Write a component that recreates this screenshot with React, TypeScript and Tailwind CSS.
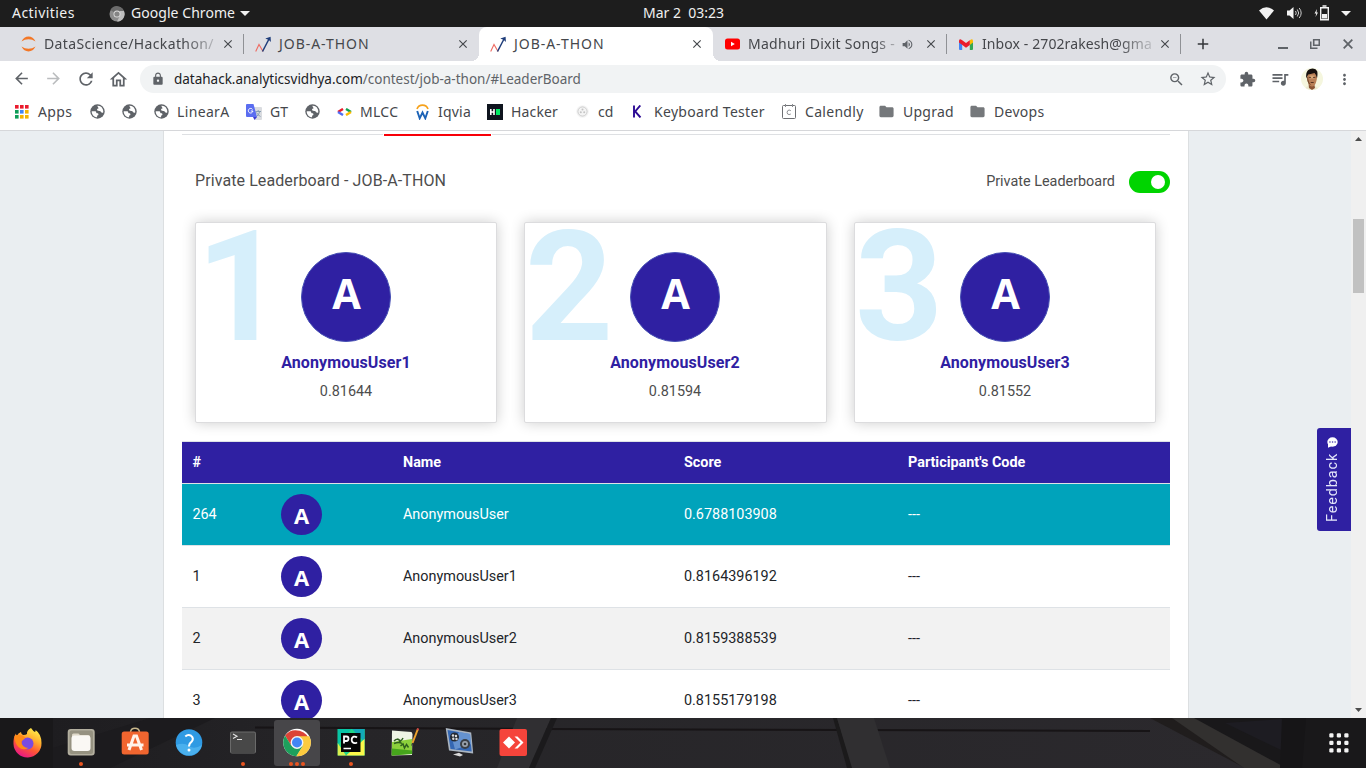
import type { ReactNode } from 'react';
import {
  MdArrowBack, MdArrowForward, MdRefresh, MdOutlineHome, MdLock, MdOutlineZoomOut, MdStarOutline,
  MdExtension, MdQueueMusic, MdMoreVert, MdFolder, MdClose, MdAdd, MdVolumeUp,
} from 'react-icons/md';

const Globe = () => (
  <svg width="15" height="15" viewBox="0 0 15 15" className="block">
    <circle cx="7.5" cy="7.5" r="7.2" fill="#5f6368" />
    <path d="M1.700 7.200h3.100c1 0 1.400.5 1.400 1.100 0 .7.4 1 1.100 1 .8 0 1.100.4 1.100 1.100 0 .8-.5 1-1.300 1.100v1.800C4 13 1.600 10.500 1.700 7.200z" fill="#fff" />
    <path d="M7.300 1.800c2.400-.2 4.200.9 5.100 2.600.8 1.300 1 2.600.8 4-.9.5-1.800.3-2.200-.5-.4-.8-.9-1-1.800-1-1.400 0-2.200-.3-2.200-1.300 0-.8.9-1 1.400-1.200.4-.3-.6-.9-1.100-2.600z" fill="#fff" />
  </svg>
);

const AppsGrid = () => (
  <svg width="14" height="14" viewBox="0 0 14 14" className="block">
    {['#ea1b2d', '#ea1b2d', '#ea1b2d', '#0f9d58', '#4285f4', '#f4b400', '#0f9d58', '#f4b400', '#f4b400'].map((c, i) => (
      <rect key={i} x={(i % 3) * 5} y={Math.floor(i / 3) * 5} width="3.600" height="3.600" fill={c} />
    ))}
  </svg>
);

const Translate = () => (
  <svg width="16" height="16" viewBox="0 0 16 16" className="block">
    <path d="M6 3h9q1 0 1 1v11q0 1-1 1H9z" fill="#dadce0" />
    <path d="M9.500 7.500h5.500M12.200 6v1.500M10.500 12.500q2.500-1.500 3.200-5M10.500 8.500q1 2.500 4 4" stroke="#7f98b0" strokeWidth=".9" fill="none" />
    <path d="M1 0h6.500L11 13H1q-1 0-1-1V1q0-1 1-1z" fill="#5a6df0" />
    <path d="M7 13h4l-2.500 3z" fill="#3a3ad0" />
    <path d="M6.500 5.400A2.300 2.300 0 1 0 6.900 7H4.800" stroke="#fff" strokeWidth="1" fill="none" />
  </svg>
);

const CodeArrows = () => (
  <svg width="15" height="8" viewBox="0 0 15 8" className="block">
    <path d="M6 .9L1 4" stroke="#ea1b2d" strokeWidth="2.300" />
    <path d="M1 4l5 3.100" stroke="#4f6df5" strokeWidth="2.300" />
    <path d="M9 .9L14 4" stroke="#12a150" strokeWidth="2.300" />
    <path d="M14 4L9 7.100" stroke="#fbbc05" strokeWidth="2.300" />
  </svg>
);

const Workera = () => (
  <svg width="13" height="16" viewBox="0 0 13 16" className="block">
    <path d="M1 5Q2.500 1.200 6.500 1.200T12 5" stroke="#f6a21c" strokeWidth="1.700" fill="none" />
    <path d="M1.200 7L3.700 14.300 6.500 8.500l2.800 5.800L11.800 7" stroke="#1c63b7" strokeWidth="1.900" fill="none" />
  </svg>
);

const HackerRank = () => (
  <svg width="16" height="16" viewBox="0 0 16 16" className="block">
    <rect width="16" height="16" fill="#0e141e" />
    <path d="M3.800 5v6M7 5v6M3.800 8H7" stroke="#fff" strokeWidth="1.600" />
    <rect x="9" y="5" width="4" height="6" fill="#00ea64" />
  </svg>
);

const FilmReel = () => (
  <svg width="13" height="13" viewBox="0 0 13 13" className="block">
    <circle cx="6.500" cy="6.500" r="6.300" fill="#f4f4f4" />
    <circle cx="6.500" cy="6.500" r="4.600" fill="none" stroke="#c4c4c4" strokeWidth=".8" />
    <circle cx="4.800" cy="7.300" r="1" fill="#c4c4c4" />
    <circle cx="8.200" cy="7.300" r="1" fill="#c4c4c4" />
    <circle cx="6.500" cy="4.500" r="1" fill="#c4c4c4" />
  </svg>
);

const LetterK = () => (
  <svg width="11" height="13" viewBox="0 0 11 13" className="block">
    <path d="M2 .5v12M8.300.500L3.200 6.500l5.300 6" stroke="#2c0a94" strokeWidth="1.900" fill="none" />
  </svg>
);

const CalendlyIcon = () => (
  <svg width="14" height="15" viewBox="0 0 14 15" className="block">
    <rect x=".5" y="1.500" width="13" height="13" rx="1" fill="none" stroke="#6d6f73" />
    <path d="M3.500 0v3M10.500 0v3" stroke="#8a8c90" />
    <path d="M8.800 6.700Q7 5.200 5.600 6.800q-1 1.600 0 3.200Q7 11.200 8.800 10" stroke="#8a8c90" fill="none" />
  </svg>
);

const Folder = () => <MdFolder className="-ml-[2px] size-[17px] text-[#75787b]" />;

const bookmarks: { w: string; icon: ReactNode; iw: string; text?: string; tr?: string }[] = [
  { w: 'w-[75px]', icon: <AppsGrid />, iw: 'w-[23px]', text: 'Apps', tr: 'tracking-[0.4px]' },
  { w: 'w-[32px]', icon: <Globe />, iw: 'w-[23px]' },
  { w: 'w-[32px]', icon: <Globe />, iw: 'w-[23px]' },
  { w: 'w-[92px]', icon: <Globe />, iw: 'w-[23px]', text: 'LinearA', tr: 'tracking-[0.35px]' },
  { w: 'w-[59px]', icon: <Translate />, iw: 'w-[24px]', text: 'GT' },
  { w: 'w-[32px]', icon: <Globe />, iw: 'w-[23px]' },
  { w: 'w-[79px]', icon: <CodeArrows />, iw: 'w-[23px]', text: 'MLCC', tr: 'tracking-[0.3px]' },
  { w: 'w-[71px]', icon: <Workera />, iw: 'w-[22px]', text: 'Iqvia', tr: 'tracking-[0.2px]' },
  { w: 'w-[89px]', icon: <HackerRank />, iw: 'w-[24px]', text: 'Hacker', tr: 'tracking-[0.15px]' },
  { w: 'w-[56px]', icon: <FilmReel />, iw: 'w-[22px]', text: 'cd' },
  { w: 'w-[150px]', icon: <LetterK />, iw: 'w-[22px]', text: 'Keyboard Tester', tr: 'tracking-[0.3px]' },
  { w: 'w-[98px]', icon: <CalendlyIcon />, iw: 'w-[23px]', text: 'Calendly', tr: 'tracking-[0.3px]' },
  { w: 'w-[91px]', icon: <Folder />, iw: 'w-[23px]', text: 'Upgrad', tr: 'tracking-[0.25px]' },
  { w: 'w-[91px]', icon: <Folder />, iw: 'w-[23px]', text: 'Devops', tr: 'tracking-[0.3px]' },
];

const Jupyter = () => (
  <svg width="15" height="16" viewBox="0 0 15 16" className="block">
    <path d="M.5 5.500Q3 .6 7.500.6t7 4.900Q11.500 3.300 7.500 3.300T.5 5.500zM.5 10.500q2.500 4.900 7 4.900t7-4.900q-3 2.200-7 2.200t-7-2.200z" fill="#f37726" />
  </svg>
);

const Spark = () => (
  <svg width="17" height="17" viewBox="0 0 17 17" className="block">
    <path d="M.7 15.500L4 8.500l4 7" stroke="#ee6b62" strokeWidth="1.100" fill="none" />
    <path d="M7.500 15.500L14 3" stroke="#1f3d7a" strokeWidth="1.500" fill="none" />
    <path d="M10.300 2.600L15.600.8l.3 5.200-2-2z" fill="#1f3d7a" />
  </svg>
);

const YouTube = () => (
  <svg width="15" height="12" viewBox="0 0 15 12" className="block">
    <rect y=".5" width="15" height="11" rx="2.500" fill="#f00" />
    <path d="M6 3.800v4.400L9.800 6z" fill="#fff" />
  </svg>
);

const Gmail = () => (
  <svg width="14" height="11" viewBox="0 0 14 11" className="block">
    <path d="M0 2v8q0 1 1 1h2.200V4z" fill="#4285f4" />
    <path d="M14 2v8q0 1-1 1h-2.200V4z" fill="#34a853" />
    <path d="M10.800 1.200Q14-1 14 2v1.500L10.800 6z" fill="#fbbc04" />
    <path d="M0 3.500V2Q0-1 3.200 1.200L7 4l3.800-2.800V6L7 8.800z" fill="#ea1c2c" />
  </svg>
);

const Close = () => <MdClose className="size-[14px] shrink-0 text-[#45484c]" />;

function TopBar() {
  return (
    <div className="flex h-[27px] items-center bg-[#1d1d1d] text-[14px] text-[#f0f0f0]">
      <span className="w-[109px] pb-[2px] pl-[12px] tracking-[0.45px]">Activities</span>
      <svg width="16" height="16" viewBox="0 0 16 16" className="block">
        <circle cx="8" cy="8" r="7.500" fill="#8c8c8c" />
        <path d="M8 8L1.400 4A7.500 7.500 0 0 1 15 5H8z" fill="#6b6b6b" />
        <path d="M15 5a7.500 7.500 0 0 1-7 10.500L11 9.500V5z" fill="#bdbdbd" />
        <circle cx="8" cy="8" r="3.500" fill="#ddd" />
        <circle cx="8" cy="8" r="2.600" fill="#848484" />
      </svg>
      <span className="ml-[6px] w-[109px] pb-[2px] tracking-[0.05px] whitespace-nowrap">Google Chrome</span>
      <svg width="10" height="5" viewBox="0 0 10 5"><path d="M0 0h10L5 5z" fill="#f0f0f0" /></svg>
      <span className="ml-[393px] pb-[2px] whitespace-pre">Mar 2  03:23</span>
      <div className="ml-auto flex items-center pr-[15px] pb-px">
        <svg width="15" height="13" viewBox="0 0 15 13"><path d="M0 3.500Q7.500-3 15 3.500L7.500 12.500z" fill="#f2f2f2" /></svg>
        <svg className="ml-[13px]" width="15" height="12" viewBox="0 0 15 12">
          <path d="M0 3.500h2.500L6.500 0v12l-4-3.500H0z" fill="#f2f2f2" />
          <path d="M8.500 4q1.500 2 0 4M10.300 2.500q2.800 3.500 0 7M12.200 1q4 5 0 10" stroke="#ccc" fill="none" />
        </svg>
        <svg className="ml-[12px]" width="16" height="16" viewBox="0 0 16 16">
          <path d="M3 4L.5 8.500h1.700L1.500 12 4 7.500H2.500z" fill="#f2f2f2" />
          <path d="M6.700 2.700h7.600v12H6.700zM8.500 1h4" stroke="#f2f2f2" strokeWidth="1.400" fill="none" />
          <path d="M8 9h5v4.500H8z" fill="#f2f2f2" />
        </svg>
        <svg className="ml-[11px]" width="10" height="5" viewBox="0 0 10 5"><path d="M0 0h10L5 5z" fill="#f2f2f2" /></svg>
      </div>
    </div>
  );
}

function Tab({ icon, iw, text, width, pl, line, sound, tw }: {
  icon: ReactNode; iw: string; text: string; width: string; pl: string; line?: boolean; sound?: boolean; tw: string;
}) {
  return (
    <div className={`flex h-[34px] items-center ${width} ${pl}`}>
      <div className={`shrink-0 ${iw}`}>{icon}</div>
      <span className={`shrink-0 pb-[2px] whitespace-nowrap ${tw}`}>{text}</span>
      <div className="ml-auto flex items-center gap-[8px]">
        {sound && <MdVolumeUp className="mr-[2px] size-[13px] text-[#5f6368]" />}
        <Close />
        <div className={`h-[20px] w-px ${line ? 'bg-[#8f9195]' : ''}`} />
      </div>
    </div>
  );
}

function TabStrip() {
  return (
    <div className="flex h-[34px] bg-[#dedfe4] text-[14px] text-[#45474b]">
      <Tab width="w-[244px]" pl="pl-[21px]" iw="w-[23px]" icon={<Jupyter />} text="DataScience/Hackathon/" tw="tracking-[0.37px] [mask-image:linear-gradient(to_right,black_82%,#0004)]" line />
      <Tab width="w-[235px]" pl="pl-[11px]" iw="w-[24px]" icon={<Spark />} text="JOB-A-THON" tw="tracking-[0.95px]" />
      <div className="relative w-[234px] rounded-t-[8px] bg-white">
        <Tab width="w-[234px]" pl="pl-[11px]" iw="w-[24px]" icon={<Spark />} text="JOB-A-THON" tw="tracking-[0.95px]" />
        <div className="absolute bottom-0 -left-[8px] size-[8px] bg-[radial-gradient(circle_at_0_0,transparent_8px,white_8px)]" />
        <div className="absolute -right-[8px] bottom-0 size-[8px] bg-[radial-gradient(circle_at_100%_0,transparent_8px,white_8px)]" />
      </div>
      <Tab width="w-[234px]" pl="pl-[12px]" iw="w-[23px]" icon={<YouTube />} text="Madhuri Dixit Songs -" tw="tracking-[0.27px] [mask-image:linear-gradient(to_right,black_86%,#0005)]" line sound />
      <Tab width="w-[234px]" pl="pl-[12px]" iw="w-[23px]" icon={<Gmail />} text="Inbox - 2702rakesh@gma" tw="tracking-[0.1px] [mask-image:linear-gradient(to_right,black_80%,#0003)]" line />
      <div className="flex flex-1 items-center">
        <MdAdd className="ml-[13px] size-[18px] text-[#333639]" />
        <svg className="ml-[66px]" width="10" height="10" viewBox="0 0 10 10"><path d="M0 9h10" stroke="#5f6368" strokeWidth="2" /></svg>
        <svg className="ml-[22px]" width="10" height="10" viewBox="0 0 10 10">
          <path d="M3.700.7h5.600v5.600H3.700zM.7 2.500v6.800h6.800" stroke="#5f6368" strokeWidth="1.600" fill="none" />
        </svg>
        <svg className="ml-[23px]" width="10" height="10" viewBox="0 0 10 10"><path d="M.7.7l8.600 8.600M9.300.7L.7 9.300" stroke="#5f6368" strokeWidth="1.800" /></svg>
      </div>
    </div>
  );
}

function Avatar() {
  return (
    <svg width="22" height="22" viewBox="0 0 22 22" className="block">
      <defs><clipPath id="face"><circle cx="11" cy="11" r="11" /></clipPath></defs>
      <g clipPath="url(#face)">
        <rect width="22" height="22" fill="#f5f6de" />
        <path d="M3.500 22q1-3.500 4-4.500h6q3 1 4 4.500z" fill="#ece9cf" />
        <path d="M7.500 15h5.500l1 5-3 2-3-2z" fill="#8a5434" />
        <path d="M6 7q0-3.500 5-3.500t5 4q.3 4-1 7-1.500 4-4 4t-4-4Q5.700 11 6 7z" fill="#b98057" />
        <path d="M7 9q.5 6 3.500 8.500-2.500-.5-3.700-3.500-.8-2.500-.5-5z" fill="#70452b" />
        <path d="M8.500 7.500h5v3h-5z" fill="#d7a878" />
        <path d="M5.300 10.500Q4.300 3 8.500 1.200q6-1.800 7.700 2 .7 3-.2 7Q15.300 6.500 13.500 5 9 6.300 7.200 6.500 6.200 8 5.300 10.500z" fill="#17110e" />
        <path d="M7.800 9.400h2.200M12 9.400h2.300M9.700 14.500h3" stroke="#3d2013" strokeWidth=".8" />
      </g>
    </svg>
  );
}

function Toolbar() {
  return (
    <div className="flex h-[36px] items-center bg-white text-[#5f6368]">
      <div className="flex w-[140px] gap-[13px] pl-[12px]">
        <MdArrowBack className="size-[19px]" />
        <MdArrowForward className="size-[19px] text-[#babcbe]" />
        <MdRefresh className="size-[20px]" />
        <MdOutlineHome className="-ml-px size-[21px]" />
      </div>
      <div className="flex h-[28px] w-[1086px] items-center rounded-full bg-[#f1f3f4] pl-[11px]">
        <MdLock className="size-[14px]" />
        <span className="ml-[9px] text-[13.5px] tracking-[-0.01px]"><span className="text-[#202124]">datahack.analyticsvidhya.com</span>/contest/job-a-thon/#LeaderBoard</span>
        <MdOutlineZoomOut className="ml-auto size-[17px]" />
        <MdStarOutline className="mr-[9px] ml-[14px] size-[18px]" />
      </div>
      <MdExtension className="ml-[13px] size-[17px]" />
      <MdQueueMusic className="ml-[14px] size-[20px]" />
      <div className="ml-[11px]"><Avatar /></div>
      <MdMoreVert className="ml-[13px] size-[17px]" />
    </div>
  );
}

function Bookmarks() {
  return (
    <div className="flex h-[34px] items-center border-b border-[#d6d7da] bg-white pb-[4px] pl-[15px] text-[14px] text-[#45474b]">
      {bookmarks.map((b, i) => (
        <div key={i} className={`flex shrink-0 items-center ${b.w}`}>
          <div className={`shrink-0 ${b.iw}`}>{b.icon}</div>
          {b.text && <span className={`whitespace-nowrap ${b.tr ?? ''}`}>{b.text}</span>}
        </div>
      ))}
    </div>
  );
}

const winners = [
  { rank: '1', name: 'AnonymousUser1', score: '0.81644', w: 'w-[302px]', pr: '' },
  { rank: '2', name: 'AnonymousUser2', score: '0.81594', w: 'w-[303px]', pr: 'pr-px' },
  { rank: '3', name: 'AnonymousUser3', score: '0.81552', w: 'w-[302px]', pr: '' },
];

const rows = [
  { n: '264', name: 'AnonymousUser', score: '0.6788103908', cls: 'bg-[#00a3bb] text-white' },
  { n: '1', name: 'AnonymousUser1', score: '0.8164396192', cls: 'bg-white text-[#222529]' },
  { n: '2', name: 'AnonymousUser2', score: '0.8159388539', cls: 'bg-[#f2f2f2] text-[#222529]' },
  { n: '3', name: 'AnonymousUser3', score: '0.8155179198', cls: 'bg-white text-[#222529]' },
];

const gridCols = 'grid grid-cols-[88.6px_122px_281px_224px_1fr] pl-[10.4px]';

function Page() {
  return (
    <div className="flex h-[587px] overflow-hidden bg-[#eaeef1] font-[Roboto,sans-serif]">
      <div className="ml-[163px] h-full w-[1026px] shrink-0 border-x border-[#dcdfe1] bg-white px-[18px]">
        <div className="mt-[3px] flex h-[2px] w-[988px] items-start gap-px">
          <div className="h-px w-[201px] bg-[#dee0e3]" />
          <div className="h-[2px] w-[107px] bg-[#f80008]" />
          <div className="h-px flex-1 bg-[#dee0e3]" />
        </div>
        <div className="mt-[34px] flex h-[24px] w-[988px] items-center pl-[13px] text-[#4d4d4d]">
          <span className="pb-[3px] text-[16px] tracking-[0.09px]">Private Leaderboard - JOB-A-THON</span>
          <span className="mr-[14px] ml-auto text-[14.4px]">Private Leaderboard</span>
          <div className="flex h-[22px] w-[41px] items-center justify-end rounded-full bg-[#00d400] pr-[5px]">
            <div className="size-[14px] rounded-full bg-white" />
          </div>
        </div>
        <div className="mt-[28px] flex gap-[27px] pl-[13px]">
          {winners.map((w) => (
            <div key={w.rank} className={`relative flex h-[201px] flex-col items-center rounded-[2px] border border-[#dcdcde] bg-white pt-[29px] shadow-[0_0_14px_rgba(0,0,0,0.2)] ${w.w} ${w.pr}`}>
              <span className="absolute top-[-12px] left-0 text-[154px] leading-[154px] font-bold text-[#d6effb]">{w.rank}</span>
              <div className="relative flex size-[90px] items-center justify-center rounded-full border border-[#4650b4] bg-[#2f20a2] pb-[7px] pl-px font-['Open_Sans',sans-serif] text-[41.500px] leading-none font-bold text-white">A</div>
              <span className="mt-[9px] text-[16px] leading-[24px] font-bold tracking-[0.12px] text-[#2f20a2]">{w.name}</span>
              <span className="mt-[6px] text-[14.400px] leading-[22px] text-[#4d4d4d]">{w.score}</span>
            </div>
          ))}
        </div>
        <div className="mt-[18px] w-[988px] border-t border-[#dee2e6] text-[14.400px]">
          <div className={`${gridCols} h-[42px] items-center border-b border-[#dee2e6] bg-[#2f20a2] font-bold text-white`}>
            <span>#</span><span /><span>Name</span><span>Score</span><span>Participant's Code</span>
          </div>
          {rows.map((r) => (
            <div key={r.n} className={`${gridCols} h-[62px] items-center border-b border-[#dee2e6] ${r.cls}`}>
              <span>{r.n}</span>
              <div className="flex size-[41px] items-center justify-center rounded-full bg-[#2f20a2] pt-px font-['Open_Sans',sans-serif] text-[22px] leading-none font-bold text-white">A</div>
              <span>{r.name}</span><span>{r.score}</span><span>---</span>
            </div>
          ))}
        </div>
      </div>
      <div className="flex flex-1 justify-end pt-[297px]">
        <div className="flex h-[103px] w-[34px] rotate-180 items-center justify-start rounded-r-[3px] bg-[#2f20a2] pt-[9px] pl-[3px] text-[14.400px] text-[#e4e6fa] [writing-mode:vertical-rl]">
          <span className="h-[68px] tracking-[0.9px] whitespace-nowrap">Feedback</span>
          <svg width="11" height="11" viewBox="0 0 11 11" className="mt-[6px] rotate-180">
            <ellipse cx="5.500" cy="5" rx="5.200" ry="4.700" fill="#fff" />
            <path d="M1 6.500v4.300L5 9z" fill="#fff" />
            <path d="M2.300 5h1.300M4.900 5h1.300M7.500 5h1.300" stroke="#5a50b8" strokeWidth="1.300" />
          </svg>
        </div>
      </div>
      <div className="flex w-[15px] shrink-0 flex-col items-center bg-[#f0f0f0]">
        <svg className="mt-[6px] shrink-0" width="7" height="4" viewBox="0 0 7 4"><path d="M0 4h7L3.500 0z" fill="#4c4c4c" /></svg>
        <div className="mt-[78px] h-[74px] w-[11px] shrink-0 bg-[#c1c1c1]" />
        <svg className="mt-auto mb-[6px] shrink-0" width="7" height="4" viewBox="0 0 7 4"><path d="M0 0h7L3.500 4z" fill="#4c4c4c" /></svg>
      </div>
    </div>
  );
}

const dockIcons: { key: string; dots: number; art: ReactNode }[] = [
  {
    key: 'firefox', dots: 0, art: (
      <>
        <defs>
          <linearGradient id="fx" x1=".8" y1="0" x2=".3" y2="1">
            <stop offset="0" stopColor="#fff44f" /><stop offset=".35" stopColor="#ffb02e" /><stop offset=".65" stopColor="#ff5634" /><stop offset="1" stopColor="#e8138b" />
          </linearGradient>
        </defs>
        <path d="M18 0q2 3 4 4 1-1 .5-2 6 4 6 13a14 14 0 0 1-28 1Q.200 9 3 5.500q0 2 1 2.500Q5 5 8 4q0 2 2 3 3 0 4-1-.500-3.500 4-6z" fill="url(#fx)" />
        <circle cx="14.500" cy="15.500" r="6" fill="#7a4be0" />
        <path d="M1.500 8Q7 5 12.500 9.500q-2 2.500-4.500 3.500 1 7 7.500 7-6 3-10-1T1.500 8z" fill="#ff8a16" />
      </>
    ),
  },
  {
    key: 'files', dots: 1, art: (
      <>
        <rect x=".7" y="1" width="27" height="26.500" rx="3" fill="#b3af9f" /><rect x="2.500" y="2.500" width="23.500" height="23.500" rx="2" fill="#969281" />
        <path d="M5 7q0-1.500 1.500-1.500h5L13 7h8.500Q23 7 23 8.500V19H5z" fill="#dfd9c9" />
        <rect x="4.500" y="7.500" width="19" height="15.500" rx="3" fill="#faf8f4" />
      </>
    ),
  },
  {
    key: 'software', dots: 0, art: (
      <>
        <path d="M9.500 4Q10 .3 14 .3T18.500 4" stroke="#c9b88c" strokeWidth="1.500" fill="none" />
        <rect x=".7" y="3.500" width="27" height="23" rx="2.500" fill="#f0652f" />
        <path d="M8 22L13 8h2.500l5 14M6 17h16.500" stroke="#fff3ea" strokeWidth="3" fill="none" />
      </>
    ),
  },
  {
    key: 'help', dots: 0, art: (
      <>
        <circle cx="14" cy="14.500" r="13.300" fill="#2f9ae3" />
        <path d="M1 17a13.300 13.300 0 0 0 26 0Q19 22 14 18T1 17z" fill="#4ab0ee" />
        <path d="M10.300 8.500Q13 6 16 7.700q3.200 2.500.8 5.800-2.800 2-2.800 5" stroke="#fff" strokeWidth="2" fill="none" />
        <circle cx="14" cy="22" r="1.500" fill="#fff" />
      </>
    ),
  },
  {
    key: 'terminal', dots: 1, art: (
      <>
        <rect x="1" y="3.500" width="26" height="22" rx="2" fill="#6a6a6a" /><rect x="2" y="4.500" width="24" height="20.500" rx="1" fill="#484848" />
        <path d="M4 6l4 2.200-4 2.200M8 11.500h5" stroke="#e5e5e5" strokeWidth="1.100" fill="none" />
      </>
    ),
  },
  {
    key: 'chrome', dots: 3, art: (
      <>
        <circle cx="14" cy="14.500" r="13.800" fill="#fff" />
        <path d="M14 14.500H26.600A13.800 13.800 0 0 0 2.050 7.600L8.300 18z" fill="#dc4437" />
        <path d="M2.050 7.600A13.800 13.800 0 0 0 13.500 28.300L20 17.800 14 14.500 8.500 18z" fill="#1da05c" />
        <path d="M14 8.200h12.300A13.800 13.800 0 0 1 13.300 28.300L20 17.500 14 14.500z" fill="#fdcb3e" />
        <circle cx="14" cy="14.500" r="6.400" fill="#f3f3f3" /><circle cx="14" cy="14.500" r="5" fill="#4285f4" />
      </>
    ),
  },
  {
    key: 'pycharm', dots: 1, art: (
      <>
        <path d="M.7 1h27v26.500H.7z" fill="#21d789" />
        <path d="M.7 1h14L.7 17z" fill="#08c4a5" /><path d="M15 1h12.500v13z" fill="#12a9b8" /><path d="M27.500 11v16.500H9z" fill="#fcf84a" /><path d="M.7 15L9 27.500H.7z" fill="#d9ee4e" />
        <rect x="4" y="5" width="19.500" height="19" fill="#060606" />
        <path d="M7 15.500V8.500h2.300q2.200.1 2.200 2.200T9.300 13H7M20 9.500q-1.500-1.300-3.300-.8-2.300.8-2 3.500.5 3.200 3.500 3 1-.1 1.800-.8" stroke="#fff" strokeWidth="1.800" fill="none" />
        <path d="M6.500 20.500H14" stroke="#fff" strokeWidth="1.500" />
      </>
    ),
  },
  {
    key: 'editor', dots: 0, art: (
      <>
        <path d="M1 2.500l19.500 1.500 1 2L21 27 .7 27.500z" fill="#eef3e4" /><path d="M1 14l20-3v14.500L.8 27.500z" fill="#8cd03c" /><path d="M.8 20.500l20.400 2v3.500L.7 27.500z" fill="#46a51c" />
        <path d="M3 13q3-3 5-1t4-2M6.500 11q3 1 2.500 3.500M3 15.500q5-2 8 0M9.500 18l2.500-2 1.500 4 2-3.500 2 3" stroke="#2e5f1d" strokeWidth="1.500" fill="none" />
        <path d="M26.700 1.500L21.500 15" stroke="#eda22c" strokeWidth="2" /><path d="M26.500 2L27.200.3" stroke="#d34b45" strokeWidth="2.200" /><path d="M21.500 15l-.8 2.500" stroke="#333" />
      </>
    ),
  },
  {
    key: 'media', dots: 0, art: (
      <>
        <path d="M.7 0l25.500 4.500 2 21L4 22.500z" fill="#aab4c0" /><path d="M2.500 2l22.500 4 1.700 17.500L5.500 21z" fill="#3467b3" /><path d="M14 4l11 2 1.500 10L10 21.500 8 14z" fill="#7aa5dc" opacity=".7" />
        <circle cx="9.500" cy="9" r="4.500" fill="#262b33" /><circle cx="8" cy="7.500" r="1.200" fill="#ddd" /><circle cx="11" cy="8" r="1.200" fill="#ddd" /><circle cx="8.300" cy="10.800" r="1.200" fill="#ddd" /><circle cx="11.500" cy="11" r="1.200" fill="#ddd" />
        <circle cx="20" cy="16" r="5" fill="#3a3f46" /><circle cx="20" cy="16" r="3" fill="#9aa3ad" /><circle cx="20" cy="16" r="1.300" fill="#33373c" />
        <path d="M8 26.500l7 2 3-1.500-4-2.300z" fill="#d8d8d8" />
      </>
    ),
  },
  {
    key: 'anydesk', dots: 0, art: (
      <>
        <rect x=".5" y="1" width="27.500" height="27" rx="2" fill="#f5443b" />
        <path d="M4 14.500L10 8.500l6 6-6 6z" fill="#fff" /><path d="M15.500 8.500h3l6 6-6 6h-3l6-6z" fill="#fff" />
      </>
    ),
  },
];

function Dock() {
  return (
    <div className="relative h-[50px] overflow-hidden bg-[#1d1c1f]">
      <svg className="absolute inset-0" width="1366" height="50" viewBox="0 0 1366 50">
        <defs>
          <linearGradient id="deck" x1="0" x2="1">
            <stop offset="0" stopColor="#1e1d20" /><stop offset=".25" stopColor="#262528" /><stop offset="1" stopColor="#2b292d" />
          </linearGradient>
        </defs>
        <path d="M0 0h1366v50H0z" fill="#19181a" />
        <path d="M53 0h1110l85 50H53z" fill="url(#deck)" />
        <path d="M150 0h65L110 50H53V30z" fill="#1c1b1e" />
        <path d="M255 9.500L540 11l610 2" stroke="#171416" strokeWidth="2" fill="none" />
        <path d="M517 0h34l-22 50h-32z" fill="#302f32" />
        <path d="M551 0h6l-22 50h-6z" fill="#1b1a1c" />
        <path d="M833 0h4l16 50h-6z" fill="#1b1a1b" />
        <path d="M837 0h37l16 50h-38z" fill="#302f31" />
        <path d="M1150 0h25l90 50h-20z" fill="#201d1d" />
        <path d="M1172 0h22l92 50h-42z" fill="#32302f" />
        <path d="M1225 5l70-5 6 22-20 10z" fill="#1d1c22" />
        <path d="M1282 0h24l-4 50h-22z" fill="#161517" />
      </svg>
      <div className="relative flex h-[50px]">
        {dockIcons.map((d) => (
          <div key={d.key} className="flex h-[50px] w-[54px] shrink-0 justify-center pt-[2px]">
            <div className={`flex h-[46px] w-[46px] flex-col items-center rounded-[3px] pt-[8px] ${d.dots === 3 ? 'bg-[#474649]' : ''}`}>
              <svg width="28" height="29" viewBox="0 0 28 29" className="block shrink-0 overflow-visible">{d.art}</svg>
              <div className="mt-[5px] flex gap-[2px]">
                {Array.from({ length: d.dots }, (_, i) => <div key={i} className="size-[4px] rounded-full bg-[#e95420]" />)}
              </div>
            </div>
          </div>
        ))}
        <svg className="mt-[15px] mr-[17px] ml-auto" width="20" height="20" viewBox="0 0 20 20">
          {[0, 1, 2, 3, 4, 5, 6, 7, 8].map((i) => (
            <rect key={i} x={0.3 + (i % 3) * 7.5} y={0.3 + Math.floor(i / 3) * 7.5} width="4.200" height="4.200" rx="1.200" fill="#f3f3f3" />
          ))}
        </svg>
      </div>
    </div>
  );
}

export default function App() {
  return (
    <div className="flex h-[768px] w-[1366px] flex-col overflow-hidden bg-white font-['Noto_Sans',sans-serif]">
      <TopBar />
      <TabStrip />
      <Toolbar />
      <Bookmarks />
      <Page />
      <Dock />
    </div>
  );
}
